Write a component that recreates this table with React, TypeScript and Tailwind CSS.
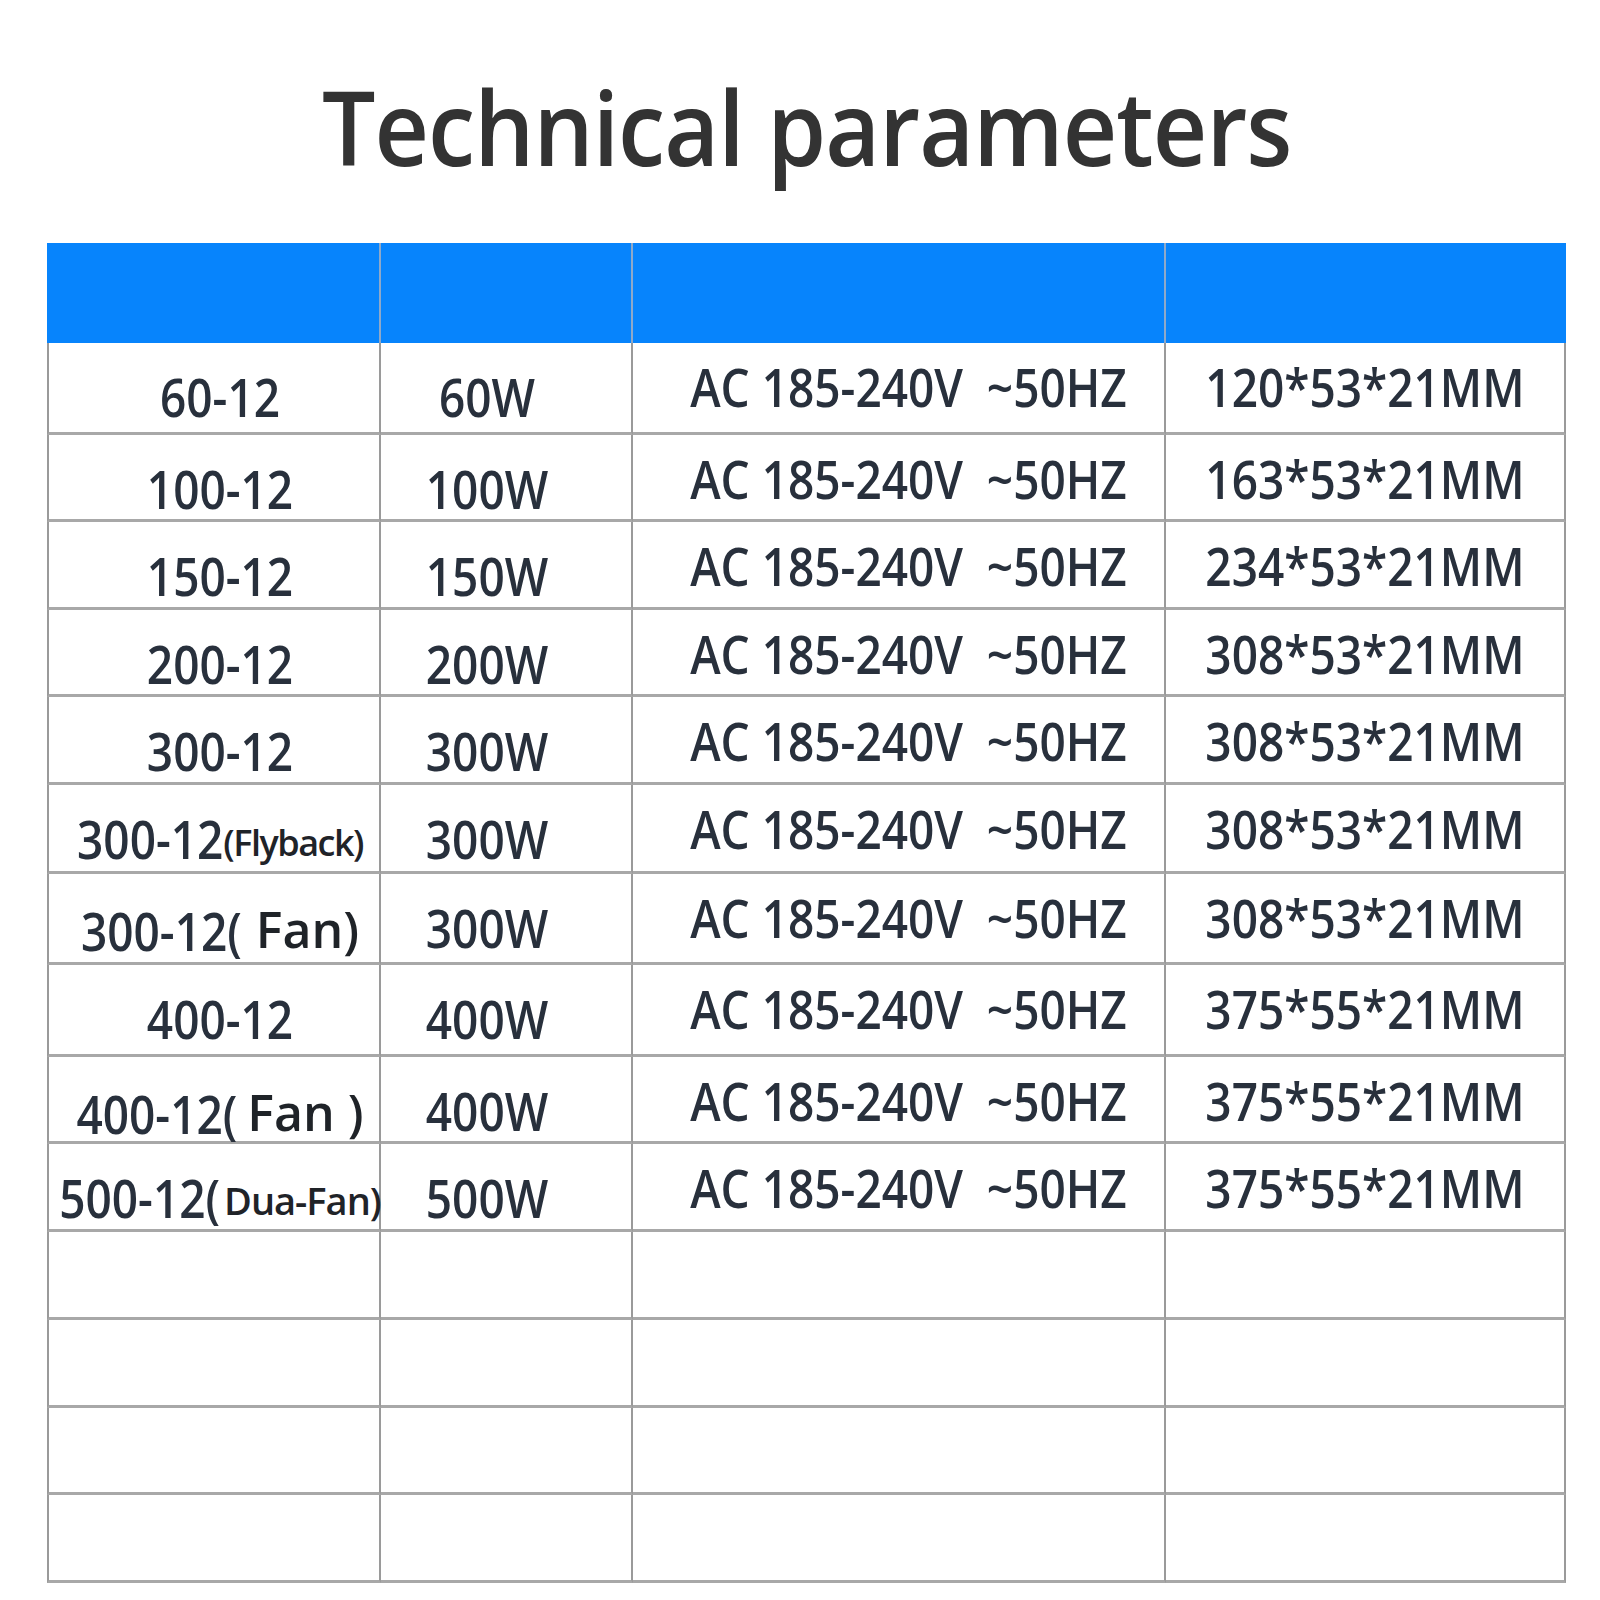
import React from "react";

type Row = { m: React.ReactNode; p: string; d: string; h: string };

const Big = ({ children }: { children: React.ReactNode }) => (
  <span className="inline-block scale-y-[1.15] whitespace-pre">{children}</span>
);

const V = "AC 185-240V\u00a0\u00a0~50HZ";

const rows: Row[] = [
  { m: <Big>60-12</Big>, p: "60W", d: "120*53*21MM", h: "h-[92px]" },
  { m: <Big>100-12</Big>, p: "100W", d: "163*53*21MM", h: "h-[87px]" },
  { m: <Big>150-12</Big>, p: "150W", d: "234*53*21MM", h: "h-[88px]" },
  { m: <Big>200-12</Big>, p: "200W", d: "308*53*21MM", h: "h-[87px]" },
  { m: <Big>300-12</Big>, p: "300W", d: "308*53*21MM", h: "h-[88px]" },
  {
    m: (
      <>
        <Big>300-12</Big>
        <span className="text-[36px] text-[#1f2328] tracking-[-1.5px]">(Flyback)</span>
      </>
    ),
    p: "300W",
    d: "308*53*21MM",
    h: "h-[89px]",
  },
  {
    m: (
      <>
        <Big>300-12(</Big>
        <span className="text-[50px] text-[#1f2328] ml-[14px]">Fan)</span>
      </>
    ),
    p: "300W",
    d: "308*53*21MM",
    h: "h-[91px]",
  },
  { m: <Big>400-12</Big>, p: "400W", d: "375*55*21MM", h: "h-[92px]" },
  {
    m: (
      <>
        <Big>400-12(</Big>
        <span className="text-[50px] text-[#1f2328] ml-[10px]">Fan )</span>
      </>
    ),
    p: "400W",
    d: "375*55*21MM",
    h: "h-[87px]",
  },
  {
    m: (
      <>
        <Big>500-12(</Big>
        <span className="text-[38px] text-[#1f2328] ml-[4px] tracking-[-1px]">Dua-Fan)</span>
      </>
    ),
    p: "500W",
    d: "375*55*21MM",
    h: "h-[88px]",
  },
];

const emptyHeights = ["h-[88px]", "h-[88px]", "h-[87px]", "h-[88px]"];

export default function App() {
  return (
    <div className="w-[1600px] h-[1600px] bg-white font-['Open_Sans',sans-serif] text-[#28303c] overflow-hidden">
      <div className="pt-[74px] pl-[14px] flex justify-center">
        <h1 className="inline-block scale-x-[0.91] text-[104px] leading-none font-semibold text-[#333333] tracking-[-1px] whitespace-nowrap">
          Technical parameters
        </h1>
      </div>
      <div className="ml-[47px] mt-[65px] w-[1519px]">
        <div className="grid grid-cols-[334px_252px_533px_400px] h-[100px] bg-[#0784fc]">
          <div className="border-r-2 border-r-[#8fa9c9]" />
          <div className="border-r-2 border-r-[#8fa9c9]" />
          <div className="border-r-2 border-r-[#8fa9c9]" />
          <div />
        </div>
        {rows.map((r, i) => (
          <div
            key={i}
            className={
              "grid grid-cols-[334px_252px_533px_400px] text-[46px] leading-none font-semibold " + r.h
            }
          >
            <div className="flex items-baseline justify-center pt-[30px] pl-[12px] border-l-2 border-l-[#9a9a9a] border-r-2 border-r-[#9a9a9a] border-b-[3px] border-b-[#a8a8a8] whitespace-nowrap">
              {r.m}
            </div>
            <div className="flex items-baseline justify-center pt-[30px] pr-[38px] border-r-2 border-r-[#9a9a9a] border-b-[3px] border-b-[#a8a8a8]">
              <Big>{r.p}</Big>
            </div>
            <div className="flex items-baseline justify-center pt-[20px] pl-[20px] border-r-2 border-r-[#9a9a9a] border-b-[3px] border-b-[#a8a8a8]">
              <Big>{V}</Big>
            </div>
            <div className="flex items-baseline justify-center pt-[20px] border-r-2 border-r-[#9a9a9a] border-b-[3px] border-b-[#a8a8a8]">
              <Big>{r.d}</Big>
            </div>
          </div>
        ))}
        {emptyHeights.map((h, i) => (
          <div key={"e" + i} className={"grid grid-cols-[334px_252px_533px_400px] " + h}>
            <div className="border-l-2 border-l-[#9a9a9a] border-r-2 border-r-[#9a9a9a] border-b-[3px] border-b-[#a8a8a8]" />
            <div className="border-r-2 border-r-[#9a9a9a] border-b-[3px] border-b-[#a8a8a8]" />
            <div className="border-r-2 border-r-[#9a9a9a] border-b-[3px] border-b-[#a8a8a8]" />
            <div className="border-r-2 border-r-[#9a9a9a] border-b-[3px] border-b-[#a8a8a8]" />
          </div>
        ))}
      </div>
    </div>
  );
}
